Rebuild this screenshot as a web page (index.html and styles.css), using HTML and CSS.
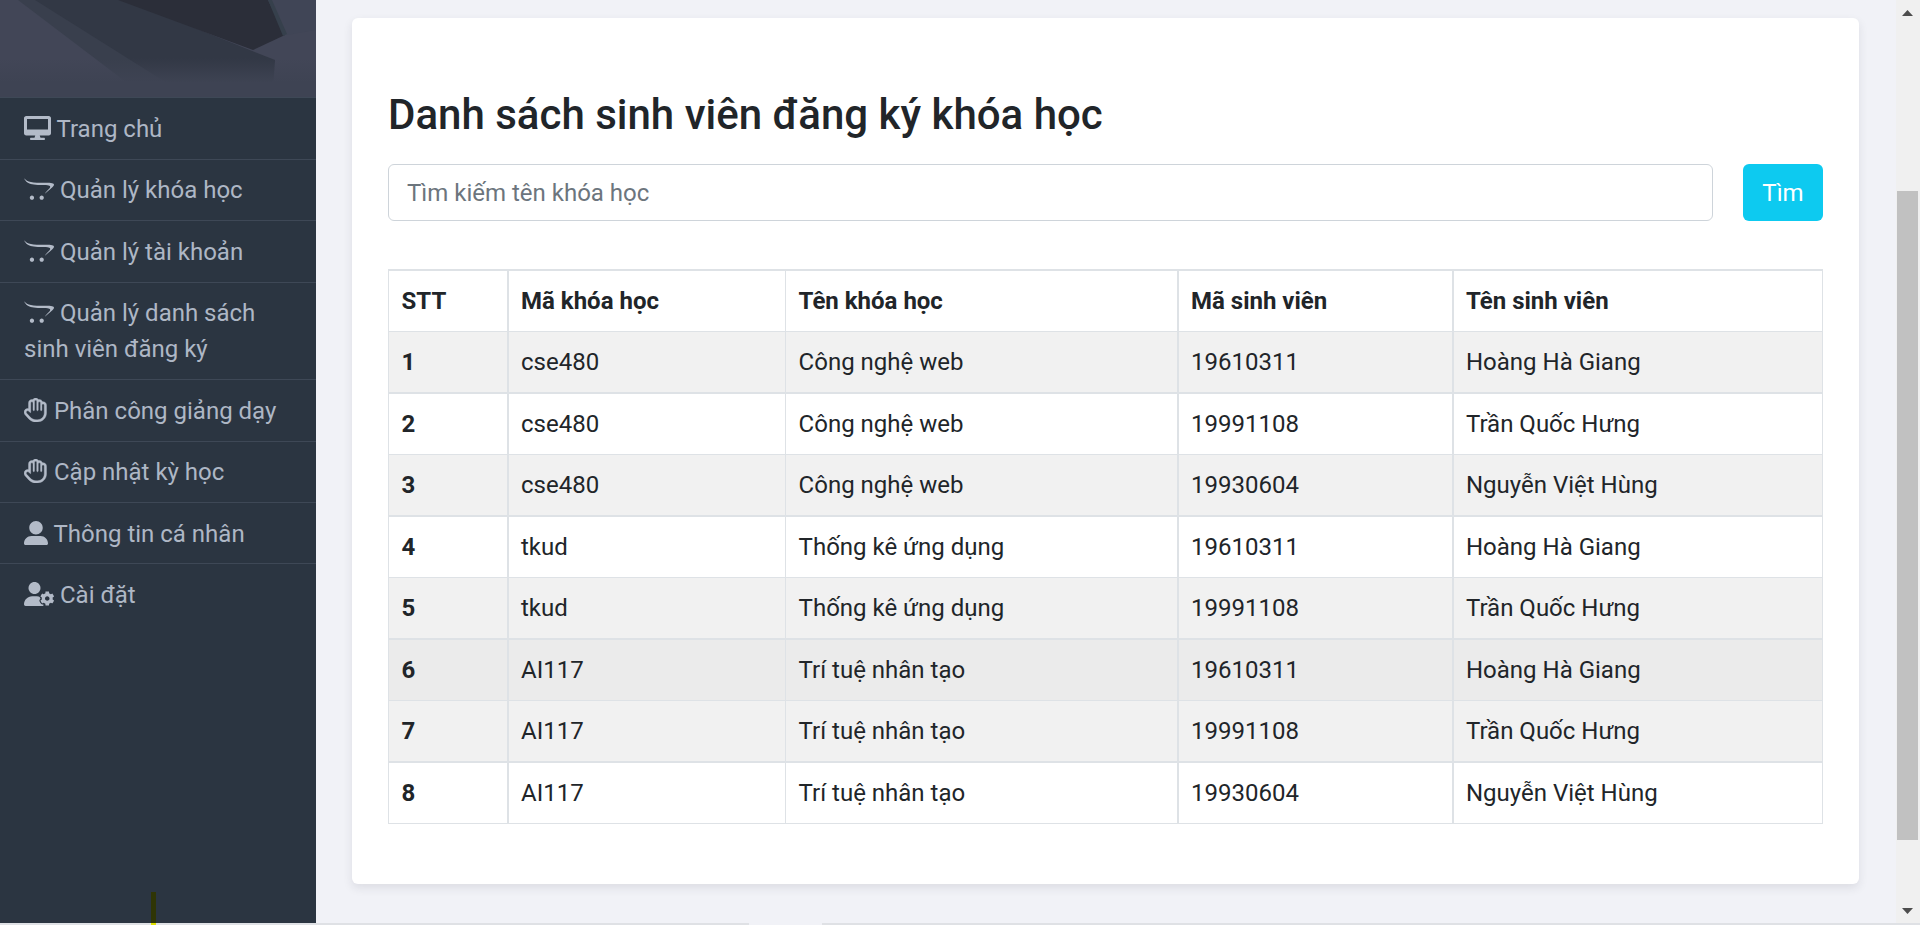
FILE: index.html
```html
<!DOCTYPE html>
<html lang="vi">
<head>
<meta charset="utf-8">
<title>Danh sách sinh viên đăng ký khóa học</title>
<link rel="stylesheet" href="styles.css">
</head>
<body>
<svg class="symbols" aria-hidden="true">
  <symbol id="desktop" viewBox="0 0 576 512"><path d="M528 0h-480C21.5 0 0 21.5 0 48v320C0 394.5 21.5 416 48 416h192L224 464H152C138.8 464 128 474.8 128 488S138.8 512 152 512h272c13.25 0 24-10.75 24-24s-10.75-24-24-24H352L336 416h192c26.5 0 48-21.5 48-48v-320C576 21.5 554.5 0 528 0zM512 288H64V64h448V288z"/></symbol>
  <symbol id="cart" viewBox="0 0 640 512"><path d="M423.3 440.7c0 25.3-20.3 45.6-45.6 45.6s-45.8-20.3-45.8-45.6 20.6-45.8 45.8-45.8c25.4 0 45.6 20.5 45.6 45.8zm-253.9-45.8c-25.3 0-45.6 20.6-45.6 45.8s20.3 45.6 45.6 45.6 45.8-20.3 45.8-45.6-20.5-45.8-45.8-45.8zm291.7-270C158.9 124.9 81.9 112.1 0 25.7c34.4 51.7 53.3 148.9 373.1 144.2 333.3-5 130 86.1 70.8 188.9 186.7-166.7 319.4-233.9 17.2-233.9z"/></symbol>
  <symbol id="hand" viewBox="0 0 512 512"><path d="M408 80c-3.994 0-7.91 .3262-11.73 .9551c-9.586-28.51-36.57-49.11-68.27-49.11c-6.457 0-12.72 .8555-18.68 2.457C296.6 13.73 273.9 0 248 0C222.1 0 199.3 13.79 186.6 34.44C180.7 32.85 174.5 32 168.1 32C128.4 32 96.01 64.3 96.01 104v121.6C90.77 224.6 85.41 224 80.01 224C36.43 224 0 259.2 0 304.1c0 20.29 7.558 39.52 21.46 54.45l81.25 87.24C141.9 487.9 197.4 512 254.9 512h33.08C393.9 512 480 425.9 480 320V152C480 112.3 447.7 80 408 80zM432 320c0 79.41-64.59 144-143.1 144H254.9c-44.41 0-86.83-18.46-117.1-50.96l-79.76-85.63c-6.202-6.659-9.406-15.4-9.406-23.1c0-22.16 18.53-31.4 31.35-31.4c8.56 0 17.1 3.416 23.42 10.18l26.72 28.69C131.8 312.7 133.9 313.4 135.9 313.4c4.106 0 8.064-3.172 8.064-8.016V104c0-13.25 10.75-24 24-24S192 90.75 192 104v152C192 264.8 199.2 272 208 272s15.1-7.156 15.1-15.1L224 72c0-13.25 10.75-24 24-24s24 10.75 24 24v184C272 264.8 279.2 272 288 272s15.99-7.164 15.99-15.1l.0077-152.2c0-13.25 10.75-24 24-24s24 10.75 24 24v152.2C352 264.8 359.2 272 368 272s15.1-7.156 15.1-15.1V152c0-13.25 10.75-24 24-24S432 138.8 432 152V320z"/></symbol>
  <symbol id="user" viewBox="0 0 512 512"><path d="M256 288c79.53 0 144-64.47 144-144s-64.47-144-144-144c-79.52 0-144 64.47-144 144S176.5 288 256 288zM352 320H160c-88.36 0-160 71.63-160 160c0 17.67 14.33 32 32 32H480c17.67 0 32-14.33 32-32C512 391.6 440.4 320 352 320z"/></symbol>
  <symbol id="user-gear" viewBox="0 0 640 512"><path d="M224 256c70.7 0 128-57.31 128-128s-57.3-128-128-128C153.3 0 96 57.31 96 128S153.3 256 224 256z"/><path d="M274.7 304H173.3C77.61 304 0 381.6 0 477.3c0 19.14 15.52 34.67 34.66 34.67H413V480l-40-50-40-20 20-58-8-34C322 309 299 304 274.7 304z"/><path class="gear" fill-rule="evenodd" d="M610.5 373.3c2.6-14.1 2.6-28.5 0-42.6l25.8-14.9c3-1.7 4.3-5.2 3.3-8.5-6.7-21.6-18.2-41.2-33.2-57.4-2.3-2.5-6-3.1-9-1.4l-25.8 14.9c-10.9-9.3-23.4-16.5-36.9-21.3v-29.8c0-3.4-2.4-6.4-5.7-7.1-22.3-5-45-4.8-66.2 0-3.3.7-5.7 3.7-5.7 7.1v29.8c-13.5 4.8-26 12-36.9 21.3l-25.8-14.9c-2.9-1.7-6.7-1.1-9 1.4-15 16.2-26.5 35.8-33.2 57.4-1 3.3.4 6.8 3.3 8.5l25.8 14.9c-2.6 14.1-2.6 28.5 0 42.6l-25.8 14.9c-3 1.7-4.3 5.2-3.3 8.5 6.7 21.6 18.2 41.1 33.2 57.4 2.3 2.5 6 3.1 9 1.4l25.8-14.9c10.9 9.3 23.4 16.5 36.9 21.3v29.8c0 3.4 2.4 6.4 5.7 7.1 22.3 5 45 4.8 66.2 0 3.3-.7 5.7-3.7 5.7-7.1v-29.8c13.5-4.8 26-12 36.9-21.3l25.8 14.9c2.9 1.7 6.7 1.1 9-1.4 15-16.2 26.5-35.8 33.2-57.4 1-3.3-.4-6.8-3.3-8.5l-25.8-14.9zM496 400.5c-26.8 0-48.5-21.8-48.5-48.5s21.8-48.5 48.5-48.5 48.5 21.8 48.5 48.5-21.7 48.5-48.5 48.5z"/></symbol>
</svg>
<div class="page">
  <aside class="sidebar">
    <svg class="banner" viewBox="0 0 316 97" preserveAspectRatio="none" aria-hidden="true">
      <defs>
        <linearGradient id="fade" x1="0" y1="0" x2="0" y2="1">
          <stop offset="0.6" stop-color="#3e4353" stop-opacity="0"/>
          <stop offset="0.85" stop-color="#3e4353"/>
        </linearGradient>
      </defs>
      <rect width="316" height="97" fill="#424657"/>
      <path d="M268 0h48v30l-29 5z" fill="#404556"/>
      <path d="M18 0h24L175 85H130z" fill="#393f4d"/>
      <path d="M35 0h90l150 60-2 28H175z" fill="#323845"/>
      <path d="M118 0h150l17 35-32 15z" fill="#2b2e39"/>
      <path d="M268 0h4l15 34-4 2z" fill="#36404c"/>
      <rect width="316" height="97" fill="url(#fade)"/>
    </svg>
    <nav class="menu">
      <a class="item"><svg class="icon w-desktop"><use href="#desktop"/></svg> Trang chủ</a>
      <a class="item"><svg class="icon w-wide"><use href="#cart"/></svg> Quản lý khóa học</a>
      <a class="item"><svg class="icon w-wide"><use href="#cart"/></svg> Quản lý tài khoản</a>
      <a class="item"><svg class="icon w-wide"><use href="#cart"/></svg> Quản lý danh sách sinh viên đăng ký</a>
      <a class="item"><svg class="icon hand"><use href="#hand"/></svg> Phân công giảng dạy</a>
      <a class="item"><svg class="icon hand"><use href="#hand"/></svg> Cập nhật kỳ học</a>
      <a class="item"><svg class="icon"><use href="#user"/></svg> Thông tin cá nhân</a>
      <a class="item"><svg class="icon w-wide"><use href="#user-gear"/></svg> Cài đặt</a>
    </nav>
  </aside>
  <main class="content">
    <section class="card">
      <h3 class="title">Danh sách sinh viên đăng ký khóa học</h3>
      <form class="search">
        <input class="field" type="text" placeholder="Tìm kiếm tên khóa học">
        <button class="button" type="button">Tìm</button>
      </form>
      <table class="table">
        <colgroup><col class="c1"><col class="c2"><col class="c3"><col class="c4"><col class="c5"></colgroup>
        <thead>
          <tr><th>STT</th><th>Mã khóa học</th><th>Tên khóa học</th><th>Mã sinh viên</th><th>Tên sinh viên</th></tr>
        </thead>
        <tbody>
          <tr class="thin striped"><th>1</th><td>cse480</td><td>Công nghệ web</td><td>19610311</td><td>Hoàng Hà Giang</td></tr>
          <tr><th>2</th><td>cse480</td><td>Công nghệ web</td><td>19991108</td><td>Trần Quốc Hưng</td></tr>
          <tr class="thin striped"><th>3</th><td>cse480</td><td>Công nghệ web</td><td>19930604</td><td>Nguyễn Việt Hùng</td></tr>
          <tr><th>4</th><td>tkud</td><td>Thống kê ứng dụng</td><td>19610311</td><td>Hoàng Hà Giang</td></tr>
          <tr class="thin striped"><th>5</th><td>tkud</td><td>Thống kê ứng dụng</td><td>19991108</td><td>Trần Quốc Hưng</td></tr>
          <tr class="hovered"><th>6</th><td>AI117</td><td>Trí tuệ nhân tạo</td><td>19610311</td><td>Hoàng Hà Giang</td></tr>
          <tr class="thin striped"><th>7</th><td>AI117</td><td>Trí tuệ nhân tạo</td><td>19991108</td><td>Trần Quốc Hưng</td></tr>
          <tr><th>8</th><td>AI117</td><td>Trí tuệ nhân tạo</td><td>19930604</td><td>Nguyễn Việt Hùng</td></tr>
        </tbody>
      </table>
    </section>
  </main>
  <div class="scrollbar">
    <svg class="arrow" viewBox="0 0 11 6"><path d="M5.5 0L11 6H0z"/></svg>
    <div class="thumb"></div>
    <svg class="arrow down" viewBox="0 0 11 6"><path d="M0 0h11L5.500 6z"/></svg>
  </div>
</div>
<div class="edge"><span class="edge-left"></span><span class="edge-gap"></span><span class="edge-right"></span></div>
<div class="marker"></div>
</body>
</html>
```

FILE: styles.css
```css
* { box-sizing: border-box; }
body {
  margin: 0;
  height: 935px;
  overflow: hidden;
  background: #fff;
  color: #212529;
  font: 400 24px/36px Roboto, "Liberation Sans", sans-serif;
}
.symbols { display: none; }
.page { display: flex; height: 923px; background: #f1f2f7; }

.sidebar { width: 316px; flex: none; background: #2b3541; color: #aeb7c5; }
.banner { display: block; width: 316px; height: 97.1px; }
.item {
  display: block;
  padding: 12.6px 24px 11.9px;
  border-top: 1px solid #3e4856;
}
.icon { width: 24px; height: 24px; fill: #b3bbc8; vertical-align: -3px; }
.hand { stroke: #b3bbc8; stroke-width: 8px; }
.w-desktop { width: 27px; }
.w-wide { width: 30px; }
.gear { stroke: #2b3541; stroke-width: 44px; paint-order: stroke; }

.content { flex: 1; padding: 18px 37px 0 36px; }
.card {
  height: 866px;
  padding: 72px 36px 0;
  border-radius: 6px;
  background: #fff;
  box-shadow: 0 4px 10px rgba(40, 40, 60, 0.1);
}
.title { margin: 0 0 24px; font-size: 42px; line-height: 50px; font-weight: 500; }
.search { display: flex; gap: 30px; margin: 0 0 48px; }
.field {
  flex: 1;
  height: 57px;
  padding: 0 18px;
  border: 1px solid #ced4da;
  border-radius: 6px;
  font: inherit;
  background: #fff;
}
.field::placeholder { color: #6c757d; opacity: 1; }
.button {
  width: 80px;
  height: 57px;
  padding: 0;
  border: 0;
  border-radius: 6px;
  background: #0dcaf0;
  color: #fff;
  font: inherit;
}

.table {
  width: 1435px;
  table-layout: fixed;
  border-collapse: separate;
  border-spacing: 0;
  border-right: 1px solid #dee2e6;
  border-bottom: 1px solid #dee2e6;
}
.c1 { width: 119px; }
.c2 { width: 278px; }
.c3 { width: 392px; }
.c4 { width: 275px; }
.c5 { width: 370px; }
.table th, .table td {
  padding: 12px;
  border: 0 solid #dee2e6;
  border-top-width: 2px;
  border-left-width: 2px;
  text-align: left;
}
.table th:first-child, .table tr > :nth-child(3) {
  padding-left: 12.6px;
  border-left-width: 1px;
}
.table th { font-weight: 700; }
.table .thin > * { border-top-width: 1px; }
.striped { background: #f1f1f1; }
.hovered { background: #ebebeb; }

.scrollbar {
  display: flex;
  flex-direction: column;
  align-items: center;
  width: 24px;
  padding: 10px 2px 9px 1px;
  background: #f0f0f0;
}
.arrow { width: 11px; height: 6px; fill: #4d4d4d; }
.thumb { width: 21px; height: 649px; margin-top: 175px; background: #c1c1c1; }
.down { margin-top: auto; }

.edge { display: flex; height: 2px; background: #dfe1e5; }
.edge-left { width: 749px; }
.edge-gap { width: 73px; background: #f1f2f7; }
.edge-right { flex: 1; }
.marker {
  position: absolute;
  left: 151px;
  top: 892px;
  width: 5px;
  height: 33px;
  background: linear-gradient(#2f3505 31px, #dfe000 31px);
}
```
